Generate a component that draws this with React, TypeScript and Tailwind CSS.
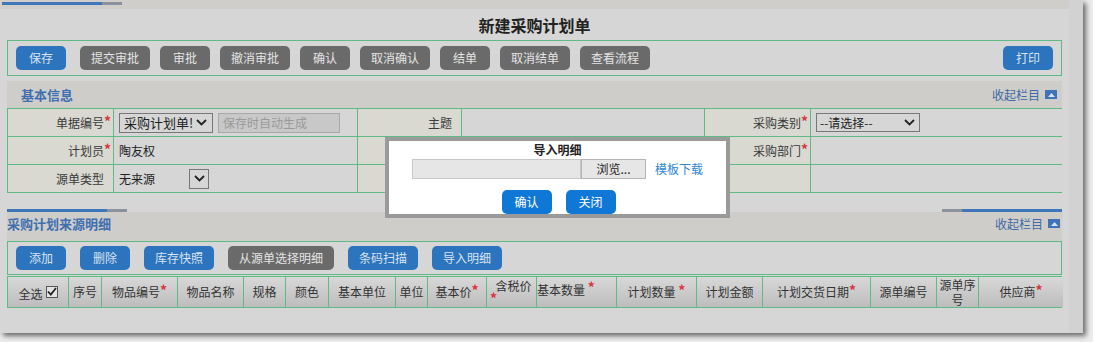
const FONT = { fontFamily: '"Noto Sans CJK SC", "Noto Sans", sans-serif' };

function Btn({ label, gray, w = 'w-[50px]', cls = '' }: { label: string; gray?: boolean; w?: string; cls?: string }) {
	return (
		<div
			className={`h-6 ${w} ${cls} shrink-0 rounded-[5px] flex items-center justify-center text-[12px] ${
				gray ? 'bg-[#6a6a6a] text-[#e4e4e4]' : 'bg-[#2c74be] text-[#d9e3ee]'
			}`}
		>
			{label}
		</div>
	);
}

function Collapse() {
	return (
		<div className="flex items-center gap-[5px] text-[12px] text-[#3f6aa6]">
			<span>收起栏目</span>
			<span className="w-3 h-[9px] bg-[#3f72b6] flex items-center justify-center">
				<svg width="7" height="4" viewBox="0 0 7 4">
					<path d="M0 4 L3.5 0 L7 4 Z" fill="#d8e2ee" />
				</svg>
			</span>
		</div>
	);
}

function Chevron() {
	return (
		<svg width="11" height="7" viewBox="0 0 11 7">
			<path d="M1 1 L5.5 5.5 L10 1" stroke="#222" strokeWidth="1.8" fill="none" />
		</svg>
	);
}

function Star() {
	return <span className="text-[#d9343a] text-[14px] font-bold leading-none relative -top-[2px]">*</span>;
}

function Label({ text, req }: { text: string; req?: boolean }) {
	return (
		<div className="bg-[#d9d8d1] flex items-center justify-end pr-[2px] text-[12px] text-[#3a3a3a]">
			{text}
			{req ? <Star /> : <span className="w-[7px]" />}
		</div>
	);
}

function Val({ children }: { children?: React.ReactNode }) {
	return <div className="bg-[#d6d6d6] flex items-center px-[5px] text-[12px] text-[#222]">{children}</div>;
}

const HEAD: { t: React.ReactNode; w: string }[] = [
	{ t: null, w: 'w-[60px]' },
	{ t: '序号', w: 'w-[32px]' },
	{ t: <>物品编号<Star /></>, w: 'w-[75px]' },
	{ t: '物品名称', w: 'w-[65px]' },
	{ t: '规格', w: 'w-[41px]' },
	{ t: '颜色', w: 'w-[42px]' },
	{ t: '基本单位', w: 'w-[66px]' },
	{ t: '单位', w: 'w-[31px]' },
	{ t: <>基本价<Star /></>, w: 'w-[58px]' },
	{ t: null, w: 'w-[49px]' },
	{ t: null, w: 'w-[79px]' },
	{ t: <>计划数量&nbsp;<Star /></>, w: 'w-[79px]' },
	{ t: '计划金额', w: 'w-[65px]' },
	{ t: <>计划交货日期<Star /></>, w: 'w-[107px]' },
	{ t: '源单编号', w: 'w-[65px]' },
	{
		t: (
			<div className="flex flex-col items-center">
				<span className="leading-[15px]">源单序</span>
				<span className="leading-[15px]">号</span>
			</div>
		),
		w: 'w-[41px]',
	},
	{ t: <>供应商<Star /></>, w: 'w-[84px]' },
];

export default function App() {
	return (
		<div className="w-[1093px] h-[342px] bg-[#ececec] relative overflow-hidden" style={FONT}>
			<div className="w-[1083px] h-[333px] bg-[#d6d6d6] flex shadow-[3px_3px_5px_rgba(0,0,0,0.55)]">
				<div className="w-[1069px] flex flex-col">
					{/* top strip */}
					<div className="h-[9px] bg-[#cfceca] pt-[2px] pl-[2px] flex">
						<div className="w-[100px] h-[3px] bg-[#3e76b8]" />
						<div className="w-5 h-[3px] bg-[#8b929d]" />
					</div>
					<div className="h-[31px] flex items-center justify-center text-[16px] font-bold text-[#222]">
						新建采购计划单
					</div>

					{/* toolbar */}
					<div className="mx-[7px] h-9 border border-[#5dbb83] flex items-center pl-2 pr-2 gap-[10px]">
						<Btn label="保存" cls="mr-1" />
						<Btn label="提交审批" gray w="w-[70px]" />
						<Btn label="审批" gray />
						<Btn label="撤消审批" gray w="w-[70px]" />
						<Btn label="确认" gray />
						<Btn label="取消确认" gray w="w-[70px]" />
						<Btn label="结单" gray />
						<Btn label="取消结单" gray w="w-[70px]" />
						<Btn label="查看流程" gray w="w-[70px]" />
						<div className="flex-1" />
						<Btn label="打印" />
					</div>

					{/* basic info header */}
					<div className="mt-[5px] mx-[7px] h-[27px] bg-[#cecdc9] flex items-center pl-[14px] pr-[5px] justify-between">
						<span className="text-[13px] font-bold text-[#3f6fb0]">基本信息</span>
						<Collapse />
					</div>

					{/* info table */}
					<div className="mx-[7px] grid grid-cols-[105px_243px_103px_242px_105px_251px] grid-rows-[27px_27px_27px] gap-px p-px bg-[#5dbb83]">
						<Label text="单据编号" req />
						<Val>
							<div className="h-5 w-[94px] border border-[#777] flex items-center justify-between pl-1 pr-[5px] text-[13px]">
								<span className="overflow-hidden whitespace-nowrap w-[72px]">采购计划单!</span>
								<Chevron />
							</div>
							<div className="ml-[5px] h-5 w-[122px] border border-[#a8a8a8] bg-[#c8c8c8] text-[#9a9a9a] flex items-center pl-1 text-[12px]">
								保存时自动生成
							</div>
						</Val>
						<Label text="主题" />
						<Val />
						<Label text="采购类别" req />
						<Val>
							<div className="h-[19px] w-[104px] border border-[#777] flex items-center justify-between pl-[3px] pr-[4px] text-[12px]">
								<span>--请选择--</span>
								<Chevron />
							</div>
						</Val>

						<Label text="计划员" req />
						<Val>陶友权</Val>
						<Label text="" />
						<Val />
						<Label text="采购部门" req />
						<Val />

						<Label text="源单类型" />
						<Val>
							<span className="w-[70px]">无来源</span>
							<div className="w-5 h-5 border border-[#777] flex items-center justify-center">
								<Chevron />
							</div>
						</Val>
						<Label text="" />
						<Val />
						<Label text="" />
						<Val />
					</div>

					{/* bars */}
					<div className="mt-4 mx-[7px] h-[3px] flex">
						<div className="w-[100px] bg-[#3e76b8]" />
						<div className="w-5 bg-[#8b929d]" />
						<div className="flex-1" />
						<div className="w-5 bg-[#8b929d]" />
						<div className="w-[100px] bg-[#3e76b8]" />
					</div>

					{/* detail header */}
					<div className="mx-[7px] h-[29px] bg-[#cecdc9] flex items-center justify-between pr-[2px] pb-[6px]">
						<span className="text-[13px] font-bold text-[#3f6fb0]">采购计划来源明细</span>
						<Collapse />
					</div>

					<div className="mx-[7px] h-[34px] border border-[#5dbb83] flex items-center pl-2 gap-[14px]">
						<Btn label="添加" />
						<Btn label="删除" />
						<Btn label="库存快照" w="w-[70px]" />
						<Btn label="从源单选择明细" gray w="w-[106px]" />
						<Btn label="条码扫描" w="w-[70px]" />
						<Btn label="导入明细" w="w-[70px]" />
					</div>

					{/* table header */}
					<div className="mt-px mx-[7px] h-[32px] flex gap-px p-px bg-[#5dbb83]">
						{HEAD.map((h, i) => (
							<div
								key={i}
								className={`${h.w} shrink-0 bg-gradient-to-b from-[#d8d8d8] to-[#bdbdbd] flex items-center justify-center text-[12px] text-[#333]`}
							>
								{i === 0 && (
									<div className="flex items-center gap-[3px] pt-[3px]">
										<span>全选</span>
										<span className="w-3 h-3 border border-[#555] bg-[#e4e4e4] flex items-center justify-center -mt-[4px]">
											<svg width="10" height="9" viewBox="0 0 10 9">
												<path d="M1 4.5 L3.8 7.5 L9 1" stroke="#222" strokeWidth="1.8" fill="none" />
											</svg>
										</span>
									</div>
								)}
								{i === 9 && (
									<div className="w-full h-full flex flex-col justify-start">
										<div className="text-center pl-1 leading-[15px] mt-[1px]">含税价</div>
										<div className="pl-[3px] leading-[10px] h-3">
											<Star />
										</div>
									</div>
								)}
								{i === 10 && (
									<div className="w-full -mt-1">
										基本数量&nbsp;<Star />
									</div>
								)}
								{i !== 0 && i !== 9 && i !== 10 && h.t}
							</div>
						))}
					</div>
				</div>
				<div className="w-[14px] bg-[#d2d2d2]" />
			</div>

			{/* dialog */}
			<div className="absolute left-[385px] top-[137px] w-[345px] h-[81px] border-4 border-[#9a9a9a] bg-white flex flex-col items-center">
				<div className="text-[12px] font-bold text-[#222] leading-4 mt-[1px]">导入明细</div>
				<div className="flex items-center mt-[1px]">
					<div className="w-[169px] h-5 bg-[#e6e6e6] border border-[#c8c8c8]" />
					<div className="w-[65px] h-5 bg-[#e6e6e6] border border-[#b4b4b4] flex items-center justify-center text-[12px] text-[#222]">
						浏览...
					</div>
					<span className="ml-[9px] text-[12px] text-[#2f86d4]">模板下载</span>
				</div>
				<div className="flex gap-[14px] mt-[11px] ml-[2px]">
					<div className="w-[50px] h-6 rounded-[5px] bg-[#0f78d7] text-white text-[12px] flex items-center justify-center">确认</div>
					<div className="w-[50px] h-6 rounded-[5px] bg-[#0f78d7] text-white text-[12px] flex items-center justify-center">关闭</div>
				</div>
			</div>
		</div>
	);
}
